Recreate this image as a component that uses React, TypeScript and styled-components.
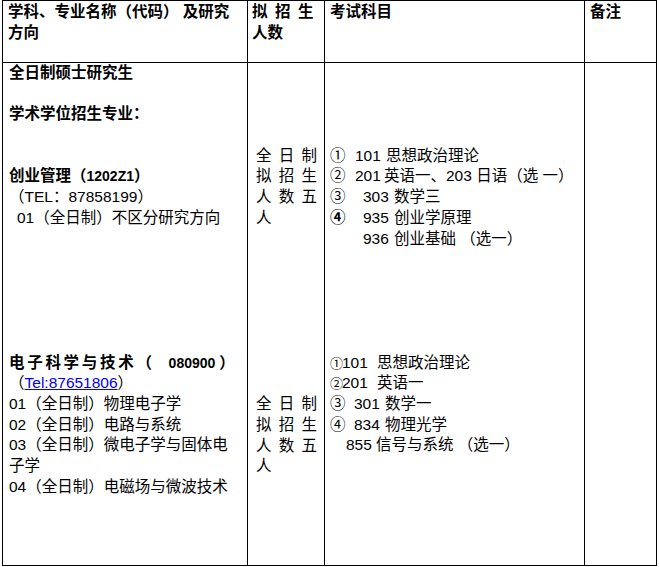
import styled, { createGlobalStyle } from "styled-components";

const LINE = 20.7;

const GlobalStyle = createGlobalStyle`
  html, body {
    margin: 0;
    padding: 0;
    background: #fff;
  }
  body {
    font-family: "Liberation Sans", "Noto Sans CJK SC", sans-serif;
    color: #000;
  }
`;

const Table = styled.div`
  display: grid;
  grid-template-columns: 245px 77px 260px 72px;
  grid-template-rows: 62px 503px;
  width: fit-content;
  margin-left: 2px;
  border-left: 1px solid #000;
  border-top: 1px solid #000;
`;

const Cell = styled.div<{ $pad?: number }>`
  box-sizing: border-box;
  border-right: 1px solid #000;
  border-bottom: 1px solid #000;
  padding-left: ${({ $pad }) => $pad ?? 5}px;
  font-size: 15.5px;
  line-height: ${LINE}px;
  min-width: 0;
`;

const HeadCell = styled(Cell)`
  font-weight: 700;
  line-height: 21px;
`;

const Spaced = styled.span`
  letter-spacing: 7.5px;
`;

const Line = styled.div<{ $bold?: boolean; $indent?: number }>`
  white-space: nowrap;
  height: ${LINE}px;
  font-weight: ${({ $bold }) => ($bold ? 700 : 400)};
  padding-left: ${({ $indent }) => $indent ?? 0}px;
`;

const Gap = styled.div<{ $lines: number }>`
  height: ${({ $lines }) => $lines * LINE}px;
`;

const Title = styled(Line)`
  letter-spacing: 2.7px;
`;

const CodeNo = styled.span<{ $before?: number; $after?: number }>`
  font-size: 14px;
  font-weight: 700;
  letter-spacing: 0;
  margin-left: ${({ $before }) => $before ?? 0}px;
  margin-right: ${({ $after }) => $after ?? 0}px;
`;

const Link = styled.a`
  color: #0000ff;
  text-decoration: underline;
`;

const Spread = styled.div`
  display: grid;
  grid-template-columns: repeat(3, 22.7px);
  grid-auto-rows: ${LINE}px;
`;

const Mark = styled.span<{ $w: number; $bold?: boolean; $size?: number }>`
  display: inline-block;
  width: ${({ $w }) => $w}px;
  font-weight: ${({ $bold }) => ($bold ? 700 : 400)};
  font-size: ${({ $size }) => $size ?? 15.5}px;
`;

const Code = styled.span<{ $w: number }>`
  display: inline-block;
  width: ${({ $w }) => $w}px;
`;

type SubjectProps = {
  mark?: string;
  markW: number;
  markSize?: number;
  code: string;
  codeW: number;
  text: string;
  bold?: boolean;
};

function Subject({ mark, markW, markSize, code, codeW, text, bold }: SubjectProps) {
  return (
    <Line>
      <Mark $w={markW} $bold={bold} $size={markSize}>
        {mark}
      </Mark>
      <Code $w={codeW}>{code}</Code>
      {text}
    </Line>
  );
}

function Quota() {
  return (
    <Spread>
      {"全日制拟招生人数五人".split("").map((c, i) => (
        <span key={i}>{c}</span>
      ))}
    </Spread>
  );
}

export default function App() {
  return (
    <>
      <GlobalStyle />
      <Table>
        <HeadCell>
          学科、专业名称（代码） 及研究
          <br />
          方向
        </HeadCell>
        <HeadCell $pad={4}>
          <Spaced>拟招生</Spaced>
          <br />
          人数
        </HeadCell>
        <HeadCell>考试科目</HeadCell>
        <HeadCell>备注</HeadCell>

        <Cell $pad={6}>
          <Line $bold>全日制硕士研究生</Line>
          <Gap $lines={1} />
          <Line $bold>学术学位招生专业：</Line>
          <Gap $lines={2} />
          <Line $bold>
            创业管理（<CodeNo>1202Z1</CodeNo>）
          </Line>
          <Line>（TEL：87858199）</Line>
          <Line $indent={8}>01（全日制）不区分研究方向</Line>
          <Gap $lines={6} />
          <Title $bold>
            电子科学与技术（<CodeNo $before={14} $after={4}>080900</CodeNo>）
          </Title>
          <Line>
            （<Link href="#">Tel:87651806</Link>）
          </Line>
          <Line>01（全日制）物理电子学</Line>
          <Line>02（全日制）电路与系统</Line>
          <Line>03（全日制）微电子学与固体电</Line>
          <Line>子学</Line>
          <Line>04（全日制）电磁场与微波技术</Line>
        </Cell>

        <Cell $pad={8}>
          <Gap $lines={4} />
          <Quota />
          <Gap $lines={8} />
          <Quota />
        </Cell>

        <Cell $pad={5}>
          <Gap $lines={4} />
          <Subject mark="①" markW={25} code="101" codeW={31} text="思想政治理论" />
          <Subject mark="②" markW={25} code="201" codeW={29} text="英语一、203 日语（选 一）" />
          <Subject mark="③" markW={33} code="303" codeW={31} text="数学三" />
          <Subject mark="④" markW={33} code="935" codeW={31} text="创业学原理" bold />
          <Subject markW={33} code="936" codeW={31} text="创业基础  （选一）" />
          <Gap $lines={5} />
          <Subject mark="①" markW={12} markSize={13} code="101" codeW={35} text="思想政治理论" />
          <Subject mark="②" markW={12} markSize={13} code="201" codeW={35} text="英语一" />
          <Subject mark="③" markW={24} code="301" codeW={31} text="数学一" />
          <Subject mark="④" markW={24} code="834" codeW={31} text="物理光学" />
          <Subject markW={16} code="855" codeW={30} text="信号与系统 （选一）" />
        </Cell>

        <Cell />
      </Table>
    </>
  );
}
